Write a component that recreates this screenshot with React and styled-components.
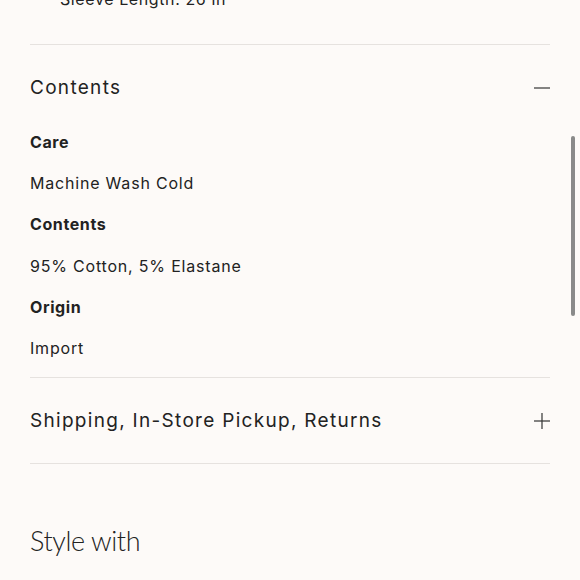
import React from "react";
import styled, { createGlobalStyle } from "styled-components";

const Global = createGlobalStyle`
  html, body { margin: 0; padding: 0; background: #fdfaf8; }
  body { font-family: "Inter", "Liberation Sans", sans-serif; color: #222; overflow: hidden; }
`;

const Page = styled.div`
  position: relative;
  height: 580px;
  overflow: hidden;
`;

const Content = styled.div`
  padding: 0 30px;
  margin-top: -13px;
`;

const List = styled.ul`
  margin: 0;
  padding: 0 0 33px 30px;
  list-style: none;
`;

const ListItem = styled.li`
  position: relative;
  font-size: 16px;
  line-height: 24px;
  letter-spacing: 0.6px;
  &::before {
    content: "";
    position: absolute;
    left: -20px;
    top: 12px;
    width: 6px;
    height: 1px;
    background: #555;
  }
`;

const Divider = styled.hr`
  margin: 0;
  border: 0;
  border-top: 1px solid #e6e2df;
`;

const Header = styled.div`
  display: flex;
  align-items: center;
  justify-content: space-between;
  padding: 31px 0 29.5px;
`;

const HeaderTitle = styled.span`
  font-size: 19px;
  line-height: 24px;
  letter-spacing: 1.3px;
  color: #222;
`;

const Icon = styled.svg`
  width: 16px;
  height: 16px;
  flex: none;
`;

const Body = styled.div`
  display: grid;
  gap: 16.4px;
  padding-bottom: 16px;
`;

const Line = styled.p`
  margin: 0;
  font-size: 16px;
  line-height: 25px;
  letter-spacing: ${(p) => (p.$bold ? "0.6px" : "0.8px")};
  font-weight: ${(p) => (p.$bold ? 700 : 400)};
  color: #222;
`;

const StyleTitle = styled.h2`
  margin: 59px 0 0;
  font-family: "Lato", sans-serif;
  font-weight: 300;
  font-size: 27px;
  line-height: 36px;
  letter-spacing: -0.4px;
  color: #222;
`;

const Scrollbar = styled.div`
  position: absolute;
  left: 571px;
  top: 136px;
  width: 4px;
  height: 180px;
  border-radius: 2px;
  background: #8a8a8a;
`;

const Minus = () => (
  <Icon viewBox="0 0 16 16">
    <line x1="0" y1="8" x2="16" y2="8" stroke="#333" strokeWidth="1.2" />
  </Icon>
);

const Plus = () => (
  <Icon viewBox="0 0 16 16">
    <line x1="0" y1="8" x2="16" y2="8" stroke="#333" strokeWidth="1.2" />
    <line x1="8" y1="0" x2="8" y2="16" stroke="#333" strokeWidth="1.2" />
  </Icon>
);

export default function App() {
  return (
    <Page>
      <Global />
      <Content>
        <List>
          <ListItem>Sleeve Length: 26 in</ListItem>
        </List>
        <Divider />
        <Header>
          <HeaderTitle>Contents</HeaderTitle>
          <Minus />
        </Header>
        <Body>
          <Line $bold>Care</Line>
          <Line>Machine Wash Cold</Line>
          <Line $bold>Contents</Line>
          <Line>95% Cotton, 5% Elastane</Line>
          <Line $bold>Origin</Line>
          <Line>Import</Line>
        </Body>
        <Divider />
        <Header>
          <HeaderTitle>Shipping, In-Store Pickup, Returns</HeaderTitle>
          <Plus />
        </Header>
        <Divider />
        <StyleTitle>Style with</StyleTitle>
      </Content>
      <Scrollbar />
    </Page>
  );
}
